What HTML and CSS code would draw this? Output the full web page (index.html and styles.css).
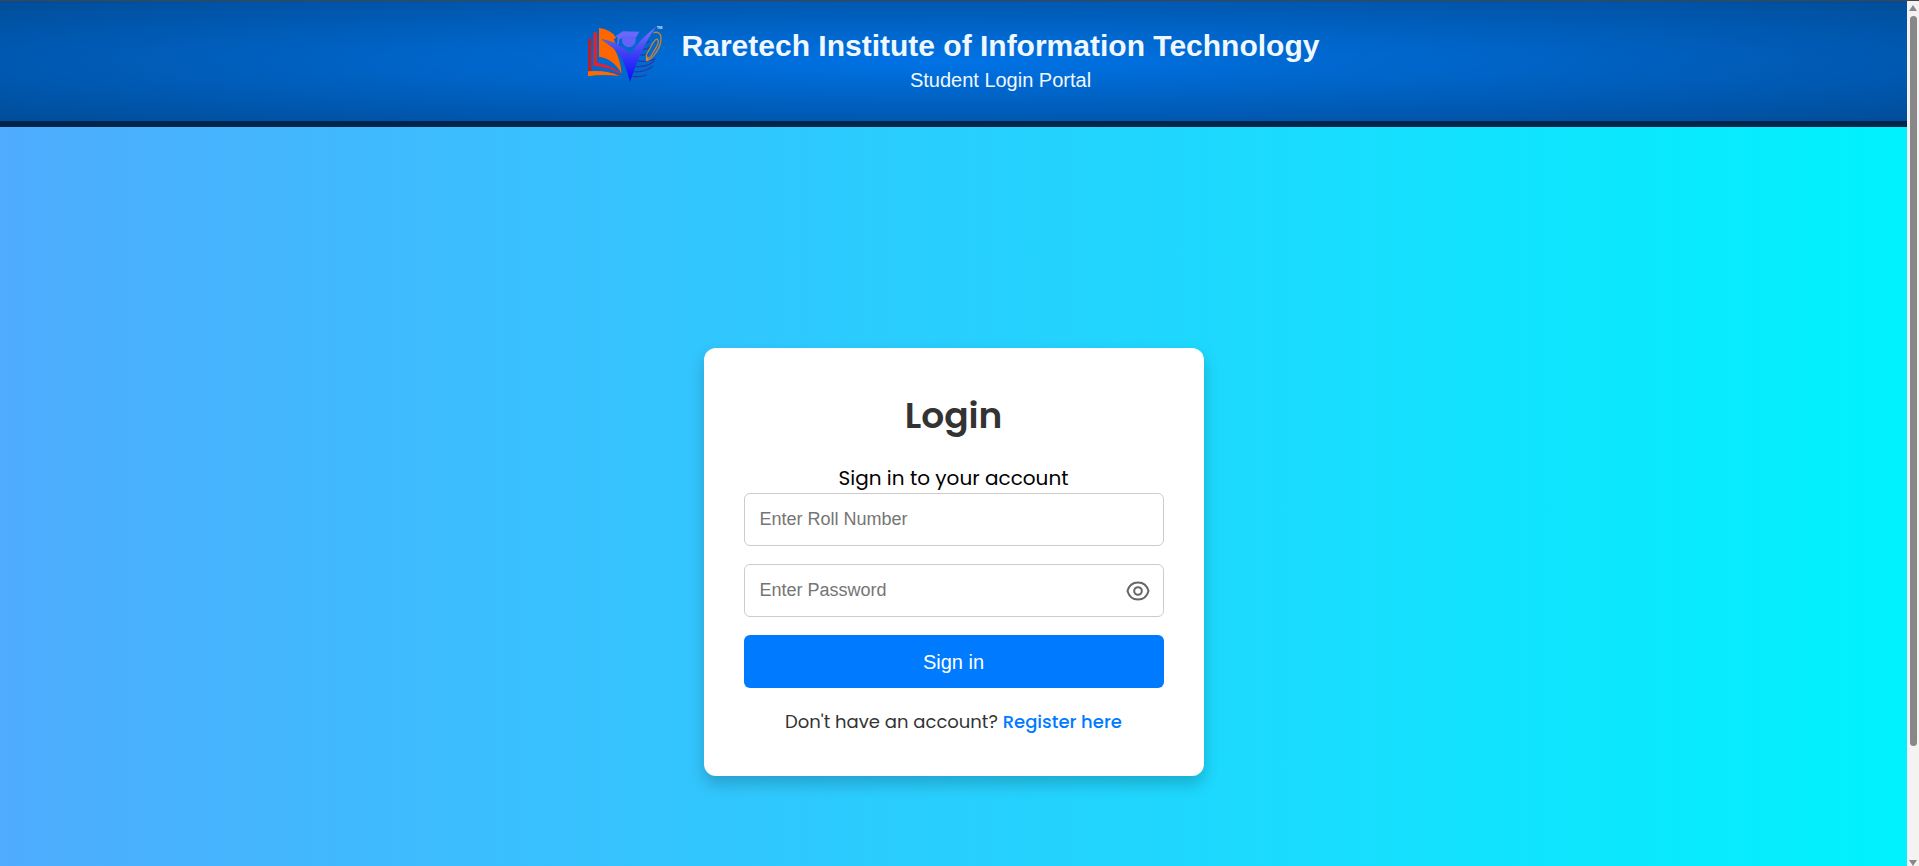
FILE: index.html
```html
<!DOCTYPE html>
<html lang="en">
<head>
<meta charset="utf-8">
<meta name="viewport" content="width=device-width, initial-scale=1">
<title>Student Login Portal</title>
<link rel="stylesheet" href="styles.css">
</head>
<body>
<div class="window">
  <div class="page">
    <header class="site-header">
      <svg class="logo" viewBox="54 50 228 174" role="img" aria-label="Raretech logo">
        <defs>
          <linearGradient id="tick" x1="0" y1="0" x2="0" y2="1">
            <stop offset="0" stop-color="#7b78ff"/>
            <stop offset=".45" stop-color="#4242f5"/>
            <stop offset="1" stop-color="#0a0aff"/>
          </linearGradient>
        </defs>
        <g fill="none" stroke="#263aa0" stroke-width="4">
          <path d="M212 102q14 2 27-7"/>
          <path d="M208 119q22 4 35-8"/>
          <path d="M204 136q20 4 32-4"/>
          <path d="M200 154q31 6 56-6"/>
          <path d="M195 171q35 4 59-17"/>
          <path d="M190 187q34 3 59-16"/>
          <path d="M186 201q23 4 43-4"/>
        </g>
        <path fill="#b5222d" d="M54 88h10v98q56-1 90 12-45-7-100-5z"/>
        <path fill="#e0242f" d="M70 69h11v91q50 8 74 36-32-22-85-26z"/>
        <path fill="#ff6600" d="M87 56q34 3 52 29l-8 5 8 18-31-15q7 8 20 16 24 40 27 84-25-45-68-51z"/>
        <path fill="#ff6a00" d="M54 186q56-5 95 14-51-7-95 1z"/>
        <path fill="#6462f8" d="M155 86q20-8 42 0 2 25-20 28-22-2-22-28z"/>
        <path fill="#6a68fa" d="M137 80l21-14 50 1-11 19q-20-7-42 0-9 1-8 18l-6 3 2-22z"/>
        <path fill="url(#tick)" stroke="#0566cd" stroke-width="2" paint-order="stroke" d="M97 91q38 8 54 20 18 8 31 24 24-44 76-82-41 53-78 165-22-87-51-103-18-14-32-24z"/>
        <path fill="none" stroke="#c0843a" stroke-width="4" stroke-linejoin="round" d="M250 70q22-6 23 16 1 22-16 45-12 19-27 23l-1-17 19-35q12-17 15-11 5 6-3 21l-17 29q-8 9-13 2"/>
        <path fill="#f08a20" d="M229 145l8 6-8 5z"/>
        <text class="logo-mark" x="260" y="60">TM</text>
      </svg>
      <div class="site-title">
        <h1>Raretech Institute of Information Technology</h1>
        <p>Student Login Portal</p>
      </div>
    </header>
    <main class="content">
      <form class="card">
        <h2>Login</h2>
        <p class="lead">Sign in to your account</p>
        <div class="field">
          <input type="text" aria-label="Roll number" placeholder="Enter Roll Number">
        </div>
        <div class="field">
          <input type="password" aria-label="Password" placeholder="Enter Password">
          <button class="reveal" type="button" aria-label="Show password">
            <svg viewBox="0 0 24 20" fill="none" stroke="#666" stroke-width="2">
              <path d="M1.500 10C3 4.500 7 1.500 12 1.500s9 3 10.500 8.500c-1.500 5.500-5.500 8.500-10.500 8.500S3 15.500 1.500 10z" stroke-linejoin="round"/>
              <circle cx="12" cy="10" r="3.800"/>
            </svg>
          </button>
        </div>
        <button class="submit" type="submit">Sign in</button>
        <p class="register">Don't have an account? <a href="#register">Register here</a></p>
      </form>
    </main>
  </div>
  <div class="scrollbar" aria-hidden="true">
    <span class="arrow arrow-up"></span>
    <span class="track"><span class="thumb"></span></span>
    <span class="arrow arrow-down"></span>
  </div>
</div>
</body>
</html>
```
FILE: styles.css
```css
* {
  box-sizing: border-box;
}

body {
  margin: 0;
  font-family: Poppins, Inter, sans-serif;
}

h1, h2, p {
  margin: 0;
}

.window {
  display: grid;
  grid-template-columns: 1fr 12px;
  height: 100vh;
  border-top: 1px solid #444;
}

.page {
  overflow-y: auto;
  scrollbar-width: none;
}

.site-header {
  display: flex;
  justify-content: center;
  align-items: flex-start;
  gap: 18px;
  padding: 25px 20px 27px;
  border-bottom: 6px solid #00264d;
  background: radial-gradient(ellipse at center, #0073e6, #004d99);
  color: #f0f8ff;
  font-family: Arial, "Liberation Sans", sans-serif;
  text-align: center;
}

.logo {
  width: 76px;
  height: 58px;
}

.logo-mark {
  fill: #dbe9ff;
  font: bold 12px "Liberation Sans", sans-serif;
}

.site-title h1 {
  font-size: 30px;
  line-height: 40px;
}

.site-title p {
  font-size: 20px;
  line-height: 28px;
}

.content {
  display: flex;
  justify-content: center;
  align-items: center;
  min-height: 100vh;
  padding: 24px 20px 20px;
  background: linear-gradient(90deg, #4facfe, #00f2fe);
}

.card {
  width: 100%;
  max-width: 500px;
  padding: 40px;
  border-radius: 12px;
  background: #fff;
  box-shadow: 0 8px 16px rgba(0, 0, 0, 0.2);
  text-align: center;
}

.card h2 {
  margin-bottom: 19px;
  color: #333;
  font-size: 36px;
  font-weight: 600;
  line-height: 56px;
}

.lead {
  color: #000;
  font-size: 20px;
  line-height: 30px;
}

.field {
  position: relative;
  margin-bottom: 18px;
}

.field input {
  display: block;
  width: 100%;
  height: 53px;
  padding: 0 15px;
  border: 1px solid #ccc;
  border-radius: 6px;
  background: #fff;
  font: 18px/24px Arial, "Liberation Sans", sans-serif;
}

.field input::placeholder {
  color: #757575;
}

.reveal {
  position: absolute;
  top: 0;
  right: 14px;
  bottom: 0;
  display: flex;
  align-items: center;
  padding: 0;
  border: 0;
  background: none;
  cursor: pointer;
}

.reveal svg {
  width: 24px;
  height: 20px;
}

.submit {
  width: 100%;
  height: 53px;
  border: 0;
  border-radius: 6px;
  background: #007bff;
  color: #fff;
  font: 20px/24px Arial, "Liberation Sans", sans-serif;
  cursor: pointer;
}

.register {
  margin-top: 20px;
  color: #333;
  font-size: 18px;
  line-height: 28px;
}

.register a {
  color: #007bff;
  font-weight: 500;
  text-decoration: none;
}

.scrollbar {
  display: flex;
  flex-direction: column;
  align-items: center;
  padding-top: 4px;
  overflow: hidden;
  background: #f3f3f3;
}

.arrow {
  border: 4px solid transparent;
}

.arrow-up {
  border-top: 0;
  border-bottom: 6px solid #888;
}

.arrow-down {
  border-top: 6px solid #888;
  border-bottom: 0;
}

.track {
  flex: 1;
  width: 7px;
  padding: 5px 0;
}

.thumb {
  display: block;
  height: 87%;
  border-radius: 4px;
  background: #888;
}
```
